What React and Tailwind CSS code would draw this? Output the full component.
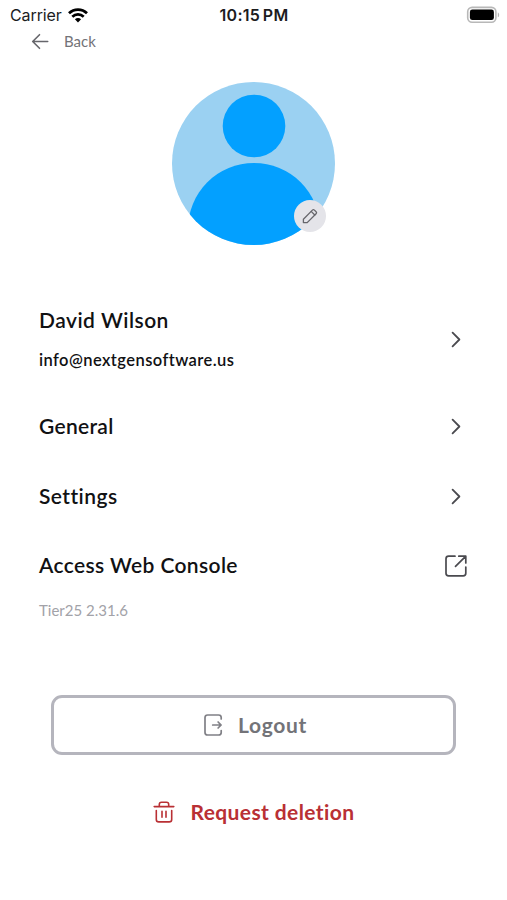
import React from "react";

function Chevron() {
  return (
    <svg width="24" height="24" viewBox="0 0 24 24" fill="none" stroke="#4a4a4f" strokeWidth="1.8" strokeLinecap="round" strokeLinejoin="round">
      <path d="M8.6 5.7 15.4 12.5 8.6 19.3" />
    </svg>
  );
}

function StatusBar() {
  return (
    <div className="grid h-[30px] grid-cols-3 items-center pl-[10px] pr-[7px] font-['Inter',sans-serif] text-[16px] text-[#1c1c1e]">
      <div className="flex items-center gap-[6px]">
        <span className="tracking-[-0.1px]">Carrier</span>
        <svg width="20" height="15" viewBox="0 0 20 15" fill="none" stroke="#000" strokeWidth="2.7">
          <path d="M1 5.3C6 .3 14 .3 19 5.3" />
          <path d="M4.3 8.7C7.5 5.6 12.5 5.6 15.7 8.7" />
          <path d="M10 14.4 6.9 11.3C8.6 9.7 11.4 9.7 13.1 11.3Z" fill="#000" stroke="none" />
        </svg>
      </div>
      <div className="pr-[2px] text-center font-semibold tracking-[0.25px] whitespace-nowrap [word-spacing:-1.5px]">10:15 PM</div>
      <div className="flex justify-end">
        <svg className="-mt-px" width="34" height="18" viewBox="0 0 34 18">
          <rect x="1.7" y="1.4" width="28.2" height="14.8" rx="4.4" fill="#fff" stroke="#b8b8b8" strokeWidth="1.6" />
          <rect x="3.9" y="3.5" width="24" height="10.6" rx="2.4" fill="#000" />
          <path d="M31.8 6.4c1.8.6 1.8 4.2 0 4.8Z" fill="#b5b5b5" />
        </svg>
      </div>
    </div>
  );
}

function Avatar() {
  return (
    <div className="relative mx-auto mt-[29px] h-[163px] w-[163px]">
      <svg width="163" height="163" viewBox="0 0 163 163">
        <defs>
          <clipPath id="avatar">
            <circle cx="81.5" cy="81.5" r="81.5" />
          </clipPath>
        </defs>
        <g clipPath="url(#avatar)">
          <rect width="163" height="163" fill="#9bd1f2" />
          <circle cx="82" cy="44" r="31.3" fill="#03a0ff" />
          <circle cx="82" cy="147" r="66" fill="#03a0ff" />
        </g>
      </svg>
      <div className="absolute top-[118px] left-[122px] flex h-8 w-8 items-center justify-center rounded-full bg-[#e4e4e9]">
        <svg width="18" height="18" viewBox="0 0 18 18" fill="none" stroke="#66666b" strokeWidth="1.3" strokeLinejoin="round" strokeLinecap="round">
          <path d="M2.4 15.6V12.2L11.4 3.1Q12.4 2.1 13.4 3.1L15.1 4.8Q16.1 5.8 15.1 6.8L6.2 15.6Z" />
          <path d="m10.2 4.4 3.6 3.6" />
        </svg>
      </div>
    </div>
  );
}

export default function App() {
  return (
    <div className="h-[900px] w-[507px] overflow-hidden bg-white font-['Lato',sans-serif] text-[#111113]">
      <StatusBar />
      <div className="flex h-[23px] items-center pl-[31px] text-[15px] text-[#737378]">
        <svg width="18" height="18" viewBox="0 0 18 18" fill="none" stroke="#66666b" strokeWidth="1.6" strokeLinecap="round" strokeLinejoin="round">
          <path d="M16.7 8.5H2M8.5 1.7 1.7 8.5l6.8 6.8" />
        </svg>
        <span className="ml-[15px]">Back</span>
      </div>
      <Avatar />

      <div className="mt-[56px] pr-[39px] pl-[39px] text-[21px] font-semibold">
        <div className="flex h-[76px] items-center justify-between">
          <div>
            <div className="h-[40px] pt-px leading-[40px] tracking-[0.48px]">David Wilson</div>
            <div className="h-[40px] pt-px text-[16.5px] leading-[40px] tracking-[0.43px]">info@nextgensoftware.us</div>
          </div>
          <Chevron />
        </div>
        <div className="mt-[14px] flex h-[70px] items-center justify-between">
          <span className="tracking-[0.3px]">General</span>
          <Chevron />
        </div>
        <div className="flex h-[69px] items-center justify-between">
          <span className="tracking-[0.45px]">Settings</span>
          <Chevron />
        </div>
        <div className="flex h-[70px] items-center justify-between">
          <span className="tracking-[0.37px]">Access Web Console</span>
          <svg className="mt-px mr-px" width="22" height="22" viewBox="0 0 22 22" fill="none" stroke="#4a4a4f" strokeWidth="1.7" strokeLinecap="round" strokeLinejoin="round">
            <path d="M10 1.2H3.6Q1 1.2 1 3.8V18.2Q1 20.8 3.6 20.8H18.2Q20.8 20.8 20.8 18.2V12" />
            <path d="M10.5 11.3 20.6 1.3M13.8 1.2H20.8V8" />
          </svg>
        </div>
        <div className="h-5 text-[15px] leading-5 font-normal text-[#a2a2a8]">Tier25 2.31.6</div>
      </div>

      <button className="mx-auto mt-[75px] flex h-[60px] w-[405px] items-center justify-center rounded-[11px] border-[3px] border-[#b5b5bd] pl-1 text-[21px] font-bold text-[#737378]">
        <svg width="19" height="22" viewBox="0 0 19 22" fill="none" stroke="#808086" strokeWidth="1.7" strokeLinecap="round" strokeLinejoin="round">
          <path d="M17.2 5V3.6Q17.2 1 14.6 1H3.6Q1 1 1 3.6V18.4Q1 21 3.6 21H14.6Q17.2 21 17.2 18.4V16.6" />
          <path d="M8.7 11H17M14.1 8 17.1 11 14.1 14" />
        </svg>
        <span className="ml-[15px] tracking-[0.7px]">Logout</span>
      </button>

      <button className="mx-auto mt-[27px] flex h-[60px] items-center justify-center pl-px text-[21px] font-bold text-[#b93034]">
        <svg width="22" height="22" viewBox="0 0 22 22" fill="none" stroke="#b93034" strokeWidth="1.6" strokeLinecap="round" strokeLinejoin="round">
          <path d="M1.2 5.6H20.8M6.3 5.4V3.4Q6.3 1.2 8.5 1.2H13.5Q15.7 1.2 15.7 3.4V5.4" />
          <path d="M3.3 9.5V18.4Q3.3 20.9 5.8 20.9H16.2Q18.7 20.9 18.7 18.4V9.5M9 10.2V16.3M13 10.2V16.3" />
        </svg>
        <span className="ml-[15px] tracking-[0.4px]">Request deletion</span>
      </button>
    </div>
  );
}
